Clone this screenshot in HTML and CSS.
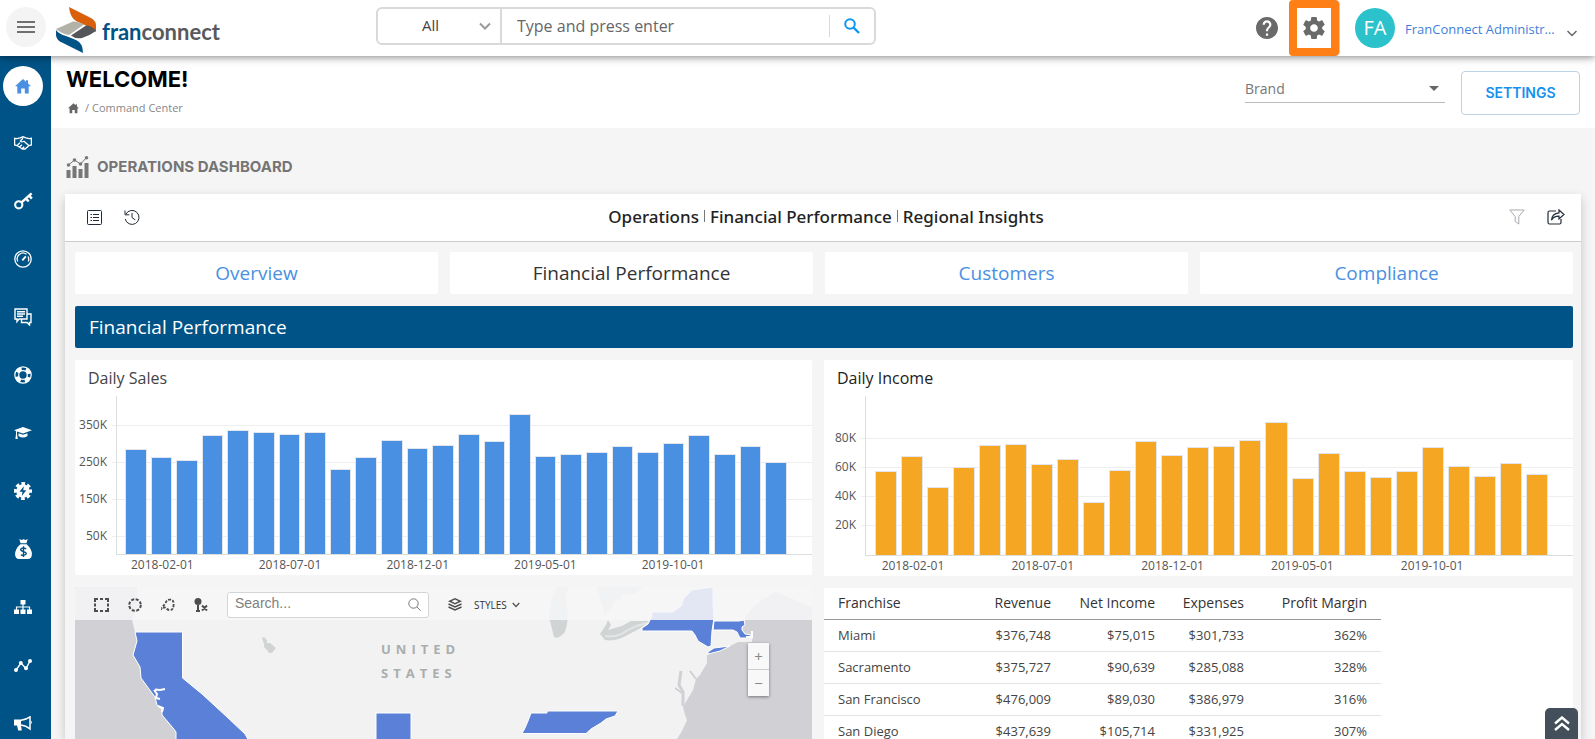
FILE: index.html
```html
<!DOCTYPE html>
<html lang="en">
<head>
<meta charset="utf-8">
<title>Command Center</title>
<link rel="stylesheet" href="styles.css">
</head>
<body>
<header class="topbar">
  <button class="menu-btn" aria-label="Menu"><svg viewBox="0 0 18 12" width="18" height="12"><path d="M0 1h18M0 6h18M0 11h18" stroke="#707070" stroke-width="2"/></svg></button>
  <a class="logo" href="#" aria-label="franconnect">
    <svg viewBox="0 0 40 46" width="40" height="46">
      <path d="M13 0 34 10.500Q40 13.500 40 18V25Q37 21 31 19L20 14Q14 10 13 0Z" fill="#d95f0a"/>
      <path d="M0 22 17 14.500Q22 14 28 17.500L13 28Q6 27 0 22Z" fill="#b3b2a9"/>
      <path d="M40 24Q36 18.500 30 18.500L15 28.500Q19 32 26 31Q33 29 40 24Z" fill="#55565a"/>
      <path d="M0 23Q3 27 10 29L20 33Q27 36 27 46L7 36Q0 33 0 28Z" fill="#005386"/>
    </svg>
    <span class="logo-text"><span class="logo-blue">fran</span>connect</span>
  </a>
  <form class="search">
    <div class="scope"><select class="scope-select" aria-label="Scope"><option>All</option></select>
      <svg viewBox="0 0 12 8" width="12" height="8"><path d="M1 1.500 6 6.500 11 1.500" fill="none" stroke="#999" stroke-width="2"/></svg></div>
    <input class="search-input" type="text" placeholder="Type and press enter" aria-label="Search">
    <button class="search-btn" type="button" aria-label="Search"><svg viewBox="0 0 16 16" width="16" height="16"><circle cx="6" cy="6" r="4.800" fill="none" stroke="#0d96f0" stroke-width="2"/><path d="m9.500 9.500 5.500 5.500" stroke="#0d96f0" stroke-width="2.400"/></svg></button>
  </form>
  <div class="tools">
    <button class="icon-btn" aria-label="Help"><svg viewBox="2 2 20 20" width="22" height="22"><path fill="#6a6a6a" d="M12 2C6.480 2 2 6.480 2 12s4.480 10 10 10 10-4.480 10-10S17.520 2 12 2zm1 17h-2v-2h2v2zm2.070-7.750l-.9.920C13.450 12.900 13 13.500 13 15h-2v-.5c0-1.100.45-2.100 1.170-2.830l1.240-1.260c.37-.36.590-.86.590-1.410 0-1.100-.9-2-2-2s-2 .9-2 2H8c0-2.210 1.790-4 4-4s4 1.790 4 4c0 .88-.36 1.680-.93 2.250z"/></svg></button>
    <button class="gear-btn" aria-label="Settings"><svg viewBox="2 2 20 20" width="22" height="22"><path fill="#6a6a6a" d="M19.430 12.980c.04-.32.070-.64.070-.98s-.03-.66-.07-.98l2.110-1.650c.19-.15.240-.42.120-.64l-2-3.460c-.12-.22-.39-.3-.61-.22l-2.490 1c-.52-.4-1.080-.73-1.690-.98l-.38-2.650A.488.488 0 0 0 14 2h-4c-.25 0-.46.180-.49.420l-.38 2.650c-.61.250-1.170.590-1.690.980l-2.490-1c-.23-.09-.49 0-.61.220l-2 3.460c-.13.220-.07.490.12.640l2.110 1.650c-.04.320-.07.650-.07.980s.03.660.070.980l-2.110 1.650c-.19.150-.24.420-.12.640l2 3.460c.12.220.39.300.61.220l2.490-1c.52.400 1.080.730 1.690.980l.38 2.650c.03.240.24.420.49.420h4c.25 0 .46-.18.490-.42l.38-2.650c.61-.25 1.170-.59 1.690-.98l2.490 1c.23.090.49 0 .61-.22l2-3.460c.12-.22.070-.49-.12-.64l-2.110-1.650zM12 15.500c-1.930 0-3.500-1.570-3.500-3.500s1.570-3.500 3.500-3.500 3.500 1.570 3.500 3.500-1.570 3.500-3.500 3.500z"/></svg></button>
    <span class="avatar">FA</span>
    <a class="user" href="#">FranConnect Administr…</a>
    <svg class="user-caret" viewBox="0 0 10 7" width="10" height="7"><path d="M.5 1 5 5.500 9.500 1" fill="none" stroke="#666" stroke-width="1.500"/></svg>
  </div>
</header>
<div class="shell">
  <nav class="sidebar">
    <a class="side active" href="#" aria-label="Home"><svg viewBox="0 0 16 15" width="16" height="15"><path fill="#4a8fe2" d="M8 0 0 7.200h2.300V14.500h3.900V9.500h3.600v5h3.900V7.200H16L13 4.500V1.300h-2v1.400Z"/></svg></a>
    <a class="side" href="#" aria-label="Relations"><svg viewBox="0 0 18 14" width="18" height="14"><path fill="none" stroke="#fff" stroke-width="1.300" d="M.6 2.300 3 2.600 6 1.800 9 .8 12 1.800 15 2.600 17.400 2.300V9L15 9.500 11 13H8.500L3 9.500.6 9ZM9 2.300 6.300 5Q7.500 6.700 10 5.200L14.500 9.300M3.500 9 6 6.800M5.500 11 8 8.800M8 12.700l2.200-2"/></svg></a>
    <a class="side" href="#" aria-label="Access"><svg viewBox="0 0 20 18" width="19" height="18"><circle cx="5" cy="13" r="3.800" fill="none" stroke="#fff" stroke-width="2.200"/><path d="M8 10.500 18.500 1M12.500 6.500l3 3M16 3.500l2.800 3" stroke="#fff" stroke-width="2.600" fill="none"/></svg></a>
    <a class="side" href="#" aria-label="Performance"><svg viewBox="0 0 18 18" width="18" height="18" fill="none" stroke="#fff"><circle cx="9" cy="9" r="8.200" stroke-width="1.300"/><path stroke-width="1.300" d="M3.800 11.500A5.800 5.800 0 0 1 12.500 4.300M14 6.500a5.800 5.800 0 0 1 .3 5"/><path d="m8.300 10.300 3.500-4" stroke-width="1.800"/></svg></a>
    <a class="side" href="#" aria-label="Messages"><svg viewBox="0 0 18 18" width="18" height="18" fill="none" stroke="#fff" stroke-width="1.400"><path d="M1 1h12v10H5l-2 2.500V11H1ZM3 3.700h8M3 6h8M3 8.300h6M13 6h4v8.500h-1.500V17L13 14.500H7.500V11"/></svg></a>
    <a class="side" href="#" aria-label="Support"><svg viewBox="0 0 18 18" width="18" height="18" fill="none" stroke="#fff"><circle cx="9" cy="9" r="8.200" stroke-width="1.200"/><circle cx="9" cy="9" r="4.300" stroke-width="1.200"/><circle cx="9" cy="9" r="6.300" stroke-width="4" stroke-dasharray="5.500 4.396" stroke-dashoffset="-2.200"/></svg></a>
    <a class="side" href="#" aria-label="Training"><svg viewBox="0 0 18 13" width="18" height="13"><path fill="#fff" d="M9 0 18 3.200 9 6.500 3 4.400V7l.8 5H1.400L2 7V4L0 3.200ZM4.500 6.200 9 7.800l4.500-1.600V9Q9 12 4.500 9Z"/></svg></a>
    <a class="side" href="#" aria-label="Automation"><svg viewBox="0 0 18 18" width="18" height="18"><circle cx="9" cy="9" r="6.800" fill="#fff"/><circle cx="9" cy="9" r="7.500" fill="none" stroke="#fff" stroke-width="3" stroke-dasharray="3.600 2.290" stroke-dashoffset="1.800"/><path fill="#005386" d="M9.800 4.200 5.500 9.800h3l-.7 4.200 4.500-5.800h-3Z"/></svg></a>
    <a class="side" href="#" aria-label="Finance"><svg viewBox="0 0 16 19" width="17" height="20"><path fill="#fff" d="M4 0 6 1 8 .3 10 1 12 0 10.800 4h-5.600ZM5 5h6q5 4.500 5 9.500Q16 19 12 19H4Q0 19 0 14.500 0 9.500 5 5Z"/><path d="M10.500 9.500Q8 7.800 6 9.200T8 12t2 2.700-4.500.3M8 7v10" stroke="#005386" stroke-width="1.300" fill="none"/></svg></a>
    <a class="side" href="#" aria-label="Organization"><svg viewBox="0 0 18 14" width="18" height="14"><path fill="#fff" d="M6.500 0h5v4.500h-5ZM0 9.500h5V14H0ZM6.500 9.500h5V14h-5ZM13 9.500h5V14h-5Z"/><path d="M9 4v6M2.500 10V7h13v3" fill="none" stroke="#fff" stroke-width="1.200"/></svg></a>
    <a class="side" href="#" aria-label="Analytics"><svg viewBox="0 0 18 13" width="18" height="13"><path d="m2 11 5-7 5 5.500L16 2" fill="none" stroke="#fff" stroke-width="1.400"/><g fill="#fff"><circle cx="2" cy="11" r="2"/><circle cx="6.800" cy="4" r="2"/><circle cx="12" cy="9.300" r="2"/><circle cx="16" cy="2" r="2"/></g></svg></a>
    <a class="side" href="#" aria-label="Marketing"><svg viewBox="0 0 18 15" width="18" height="15"><path fill="#fff" d="M0 3.500h7V9.500l.8 5H4.200L3 9.500H0ZM16.800 4.500q2 1.500 0 4Z"/><path d="M7 4.200q5-.5 9-3.400v12Q12 9.500 7 9" fill="none" stroke="#fff" stroke-width="1.500"/></svg></a>
  </nav>
  <main class="main">
    <section class="pagehead">
      <div class="headings">
        <h1 class="welcome">WELCOME!</h1>
        <div class="crumbs"><svg viewBox="0 0 16 15" width="11" height="11"><path fill="#666" d="M8 0 0 7.200h2.300V14.500h3.900V9.500h3.600v5h3.900V7.200H16L13 4.500V1.300h-2v1.400Z"/></svg><span class="slash">/</span><a class="crumb" href="#">Command Center</a></div>
      </div>
      <div class="brand"><select class="brand-select" aria-label="Brand"><option>Brand</option></select>
        <svg viewBox="0 0 10 5" width="10" height="5"><path d="M0 0h10L5 5Z" fill="#666"/></svg></div>
      <button class="settings">SETTINGS</button>
    </section>
    <h2 class="section-title"><svg viewBox="0 0 22 22" width="23" height="22"><path fill="#777" d="M0 14h4v8H0ZM6 10h4v12H6ZM12 13h4v9h-4ZM18 7h4v15h-4Z"/><path d="m2 9 6-5 6 4 6-6.500" fill="none" stroke="#777"/><g fill="#777"><circle cx="2" cy="9" r="1.800"/><circle cx="8" cy="4" r="1.800"/><circle cx="14" cy="8" r="1.800"/><circle cx="20" cy="1.800" r="1.800"/></g></svg>OPERATIONS DASHBOARD</h2>
    <section class="board">
      <div class="board-head">
        <div class="board-icons">
          <button class="icon-btn" aria-label="List"><svg viewBox="0 0 15 15" width="15" height="15" fill="none" stroke="#222b38"><rect x=".5" y=".5" width="14" height="14" rx="1"/><path d="M6 4.500h6M6 7.500h6M6 10.500h6M3.500 4.500H5M3.500 7.500H5M3.500 10.500H5"/></svg></button>
          <button class="icon-btn" aria-label="History"><svg viewBox="0 0 16 16" width="16" height="16" fill="none" stroke="#222b38"><path d="M1.800 5.200A7 7 0 1 1 1.200 10M1 1.500v4.300h4.300M8 4v4.500l3.300 2.500"/></svg></button>
        </div>
        <h3 class="board-title"><span>Operations</span><i></i><span>Financial Performance</span><i></i><span>Regional Insights</span></h3>
        <div class="board-icons right">
          <button class="icon-btn" aria-label="Filter"><svg viewBox="0 0 16 16" width="16" height="16" fill="none" stroke="#a9a9b0"><path d="M.8 1h14.400L9.800 7.500V15L6.200 12.500v-5Z"/></svg></button>
          <button class="icon-btn" aria-label="Share"><svg viewBox="0 0 18 16" width="18" height="16" fill="none" stroke="#222b38" stroke-width="1.200"><path d="M9 2H2.500Q1 2 1 3.500v10Q1 15 2.500 15h10q1.500 0 1.500-1.500V10M12 1l5 4.500L12 10V7.200q-5-.2-7.500 4Q5 4.500 12 3.800Z"/></svg></button>
        </div>
      </div>
      <div class="board-body">
        <nav class="tabs">
          <a class="tab" href="#">Overview</a><a class="tab current" href="#">Financial Performance</a><a class="tab" href="#">Customers</a><a class="tab" href="#">Compliance</a>
        </nav>
        <h3 class="banner">Financial Performance</h3>
        <div class="cards">
          <div class="column">
            <section class="card chart sales">
              <h4 class="card-title">Daily Sales</h4>
              <div class="yaxis"><span>350K</span><span>250K</span><span>150K</span><span>50K</span></div>
              <div class="lines"><i></i><i></i><i></i><i></i></div>
              <div class="bars">
                <i style="height:105px"></i><i style="height:97px"></i><i style="height:94px"></i><i style="height:119px"></i><i style="height:124px"></i><i style="height:122px"></i><i style="height:120px"></i><i style="height:122px"></i><i style="height:85px"></i><i style="height:97px"></i><i style="height:114px"></i><i style="height:106px"></i><i style="height:109px"></i><i style="height:120px"></i><i style="height:113px"></i><i style="height:140px"></i><i style="height:98px"></i><i style="height:100px"></i><i style="height:102px"></i><i style="height:108px"></i><i style="height:102px"></i><i style="height:111px"></i><i style="height:119px"></i><i style="height:100px"></i><i style="height:108px"></i><i style="height:92px"></i>
              </div>
              <div class="xaxis"><span>2018-02-01</span><span>2018-07-01</span><span>2018-12-01</span><span>2019-05-01</span><span>2019-10-01</span></div>
            </section>
            <section class="card map">
              <svg class="map-art" viewBox="0 0 737 180" preserveAspectRatio="xMinYMin slice">
                <rect width="737" height="180" fill="#f2f2f2"/>
                <path fill="#d1d0d5" d="M0 0H62V20L57 33 60 45 62 54 58 68 65 80 66 91 74 102 80 110 82 118 87 122V128L98 141 101 145V180H0Z"/>
                <path fill="#d1d0d5" d="M737 20 718 12 700 5 692 10 680 18 672 28 669 37 667 42 672 50 678 47 677 55 663 55 655 59 632 68 632 76 625 88 621 92 618 103 612 113 608 120 610 128 612 133 607 144 602 152V180H737Z"/>
                <g fill="#d0d4d4"><path d="M187 51 189 50 192 53 192 56 195 56 201 61 197 66 194 66 192 63 189 60 189 57Z"/>
                <path d="M474 30Q475 12 482 0H494Q488 8 492 20 494 34 490 45 483 53 479 50 474 42Z"/>
                <path d="M525 47 531 38 533 33 536 38 533 43 547 39 556 34H574Q566 42 554 47 542 55 530 53Z"/>
                <path d="M522 0H568Q555 12 548 6 545 15 541 12 538 20 530 28 526 14Z"/></g>
                <path d="M530 49Q542 51 553 43 562 38 572 36" fill="none" stroke="#e3e6e6" stroke-width="2"/>
                <path d="M606 84 604 98 608 105V119" fill="none" stroke="#d1d0d5" stroke-width="3"/><path d="M600 101 607 106M615 84 621 92" stroke="#d1d0d5" stroke-width="2"/>
                <g fill="#5b80d8" stroke="#fff" stroke-width="1"><path d="M60 45H107.500V91L127 107 152 130 170 147 180 165V180H101V145L98 141 87 128V122L82 118 80 110 74 102 66 91 65 80 58 68 62 54Z"/>
                <path d="M301 126H336V181H301Z"/>
                <path d="M456 126H472V124H520L543 124 540 129 531 132 526 136 516 142 511 146.500H447L450 141 453 134Z"/>
                <path d="M567 44V41L573 37 577 29V25H598L606 19 609 11 617 3 638 0V18L639 31 637 44 636 59 633 60 623 54 620 48 617 44Z"/>
                <path d="M639 34H664L669 33 670 38 667 40 667 43 670 47 677 48 671 51 665 51 662 45 658 43H638Z"/>
                <path d="M633 65 639 61 655 59 645 64 633 67Z"/></g>
                <path d="M80 102.500 85 103 90 102M79 103 82 107 81 111 85 112M83 119 88 121 87 125M671 50 677 50V44" fill="none" stroke="#fff" stroke-width="2"/>
                <g class="map-name"><text x="306" y="67">UNITED</text><text x="306" y="91">STATES</text></g>
              </svg>
              <div class="map-tools">
                <button class="icon-btn" aria-label="Rectangle select"><svg viewBox="0 0 15 14" width="15" height="14"><path fill="none" stroke="#4d4d4d" stroke-width="2" d="M1 4V1h3M6 1h3M11 1h3v3M14 5.500v3M14 10v3h-3M9 13H6M4 13H1v-3M1 8.500v-3"/></svg></button>
                <button class="icon-btn" aria-label="Circle select"><svg viewBox="0 0 14 14" width="14" height="14"><circle cx="7" cy="7" r="5.800" fill="none" stroke="#4d4d4d" stroke-width="2" stroke-dasharray="3 1.555"/></svg></button>
                <button class="icon-btn" aria-label="Lasso select"><svg viewBox="0 0 15 14" width="14" height="14"><path fill="none" stroke="#4d4d4d" stroke-width="2" stroke-dasharray="3 1.500" d="M5 5Q6 1 10 1.200T13.500 7 10 12.500 5.500 10.500 1 11 5 5"/></svg></button>
                <button class="icon-btn" aria-label="Clear pins"><svg viewBox="0 0 14 14" width="14" height="14"><circle cx="4" cy="3.500" r="3.500" fill="#4d4d4d"/><path d="M4 7v6M2 13h4M8 7.500l5 5M13 7.500l-5 5" stroke="#4d4d4d" stroke-width="2"/></svg></button>
                <label class="map-search"><input class="map-input" type="text" placeholder="Search..." aria-label="Search map"><svg viewBox="0 0 13 13" width="13" height="13" fill="none" stroke="#777"><circle cx="5.500" cy="5.500" r="4.700"/><path d="m9 9 3.600 3.600"/></svg></label>
                <svg viewBox="0 0 14 13" width="14" height="13"><path fill="#4d4d4d" fill-rule="evenodd" d="m7 0 7 3.300L7 6.600 0 3.300ZM7 1.600 3.500 3.300 7 5l3.500-1.700Z"/><path d="m.5 6 6.500 3 6.500-3M.5 9 7 12l6.500-3" fill="none" stroke="#4d4d4d" stroke-width="1.400"/></svg>
                <button class="styles-btn">STYLES <svg viewBox="0 0 8 6" width="8" height="6"><path d="M.7 1 4 4.500 7.300 1" fill="none" stroke="#555" stroke-width="1.300"/></svg></button>
              </div>
              <div class="zoomers"><button class="zoomer">+</button><button class="zoomer">−</button></div>
            </section>
          </div>
          <div class="column">
            <section class="card chart income">
              <h4 class="card-title">Daily Income</h4>
              <div class="yaxis"><span>80K</span><span>60K</span><span>40K</span><span>20K</span></div>
              <div class="lines"><i></i><i></i><i></i><i></i></div>
              <div class="bars">
                <i style="height:84px"></i><i style="height:99px"></i><i style="height:68px"></i><i style="height:88px"></i><i style="height:110px"></i><i style="height:111px"></i><i style="height:91px"></i><i style="height:96px"></i><i style="height:53px"></i><i style="height:85px"></i><i style="height:114px"></i><i style="height:100px"></i><i style="height:108px"></i><i style="height:109px"></i><i style="height:115px"></i><i style="height:133px"></i><i style="height:77px"></i><i style="height:102px"></i><i style="height:84px"></i><i style="height:78px"></i><i style="height:84px"></i><i style="height:108px"></i><i style="height:89px"></i><i style="height:79px"></i><i style="height:92px"></i><i style="height:81px"></i>
              </div>
              <div class="xaxis"><span>2018-02-01</span><span>2018-07-01</span><span>2018-12-01</span><span>2019-05-01</span><span>2019-10-01</span></div>
            </section>
            <section class="card listing">
              <table class="table">
                <thead><tr><th>Franchise</th><th>Revenue</th><th>Net Income</th><th>Expenses</th><th>Profit Margin</th></tr></thead>
                <tbody>
                  <tr><td>Miami</td><td>$376,748</td><td>$75,015</td><td>$301,733</td><td>362%</td></tr>
                  <tr><td>Sacramento</td><td>$375,727</td><td>$90,639</td><td>$285,088</td><td>328%</td></tr>
                  <tr><td>San Francisco</td><td>$476,009</td><td>$89,030</td><td>$386,979</td><td>316%</td></tr>
                  <tr><td>San Diego</td><td>$437,639</td><td>$105,714</td><td>$331,925</td><td>307%</td></tr>
                </tbody>
              </table>
            </section>
          </div>
        </div>
      </div>
    </section>
  </main>
</div>
<button class="to-top" aria-label="Back to top"><svg viewBox="0 0 16 15" width="16" height="15"><path d="m1 7.500 7-6 7 6M1 14l7-6 7 6" fill="none" stroke="#fff" stroke-width="2.400"/></svg></button>
</body>
</html>
```
FILE: styles.css
```css
* { box-sizing: border-box; }
body { margin: 0; height: 100vh; overflow: hidden; display: flex; flex-direction: column; font-family: "Open Sans", "Noto Sans", sans-serif; font-size: 13px; color: #444; background: #f5f5f5; }
h1, h2, h3, h4 { margin: 0; font-weight: 400; }
a { text-decoration: none; color: inherit; }
button { font: inherit; border: 0; padding: 0; background: none; cursor: pointer; }
svg { display: block; flex: none; }
select { appearance: none; border: 0; background: none; font: inherit; }

.topbar { flex: none; height: 56px; display: flex; align-items: center; background: #fff; box-shadow: 0 1px 8px rgba(0,0,0,.5); padding: 0 18px 2px 6px; position: relative; z-index: 2; }
.menu-btn { width: 40px; height: 40px; border-radius: 50%; background: #f4f4f4; display: grid; place-items: center; }
.logo { display: flex; align-items: center; gap: 6px; margin-left: 10px; padding-top: 5px; width: 320px; }
.logo-text { font-family: Lato, sans-serif; font-size: 22px; font-weight: 700; line-height: 30px; padding-top: 5px; color: #58595b; }
.logo-blue { color: #005386; }
.search { display: flex; width: 500px; height: 38px; border: 2px solid #d9d9d9; border-radius: 6px; margin: 0 0 2px; }
.scope { width: 124px; display: flex; align-items: center; border-right: 2px solid #d9d9d9; padding-right: 9px; }
.scope-select { flex: 1; font-size: 15px; color: #444; text-align: center; text-align-last: center; padding: 0 0 2px 4px; }
.search-input { flex: 1; border: 0; outline: 0; background: none; font: inherit; font-size: 16px; padding: 0 15px; }
.search-input::placeholder { color: #666; opacity: 1; }
.search-btn { width: 45px; margin: 6px 0; border-left: 1px solid #d9d9d9; display: grid; place-items: center; }
.tools { margin-left: auto; display: flex; align-items: center; padding-top: 2px; }
.icon-btn { display: block; }
.gear-btn { width: 50px; height: 56px; border: 8px solid #ff7f17; border-radius: 4px; margin: 0 16px 0 11px; display: grid; place-items: center; box-shadow: 2px 0 0 -1px #ccc; }
.avatar { width: 40px; height: 40px; border-radius: 50%; background: #2bc2cb; color: #fff; font-size: 20px; line-height: 39px; text-align: center; }
.user { width: 172px; padding-left: 10px; color: #3f7fdc; font-size: 13px; padding-top: 2px; white-space: nowrap; }
.user-caret { margin-top: 10px; }

.shell { flex: 1; min-height: 0; display: flex; }
.sidebar { flex: none; width: 51px; background: #005386; padding: 10px 0 0 3px; overflow: hidden; display: flex; flex-direction: column; gap: 18px; }
.side { flex: none; width: 40px; height: 40px; border-radius: 50%; display: grid; place-items: center; padding-bottom: 2px; }
.side.active { background: #fff; padding-bottom: 0; }
.main { flex: 1; min-width: 0; overflow: hidden; display: flex; flex-direction: column; }
.pagehead { flex: none; height: 72px; background: #fff; display: flex; align-items: flex-start; padding: 8px 15px 0 15px; }
.headings { flex: 1; }
.welcome { font-family: Inter, sans-serif; font-size: 22px; font-weight: 700; line-height: 30px; color: #000; }
.crumbs { display: flex; align-items: center; gap: 3px; padding: 6px 0 0 2px; font-size: 11px; line-height: 16px; color: #888; }
.slash { padding-left: 3px; }
.brand { width: 200px; height: 31px; margin: 8px 16px 0 0; border-bottom: 1px solid #bbb; display: flex; align-items: center; padding: 3px 6px 0 0; }
.brand-select { flex: 1; font-size: 14px; color: #777; padding: 0; }
.settings { width: 119px; height: 44px; margin-top: 7px; padding-bottom: 2px; border: 1px solid #bcd3e6; border-radius: 4px; font-family: Inter, sans-serif; font-size: 14px; font-weight: 600; color: #1390f0; }
.section-title { flex: none; display: flex; align-items: center; gap: 8px; height: 66px; padding: 11px 0 0 15px; font-family: Inter, sans-serif; font-size: 15px; font-weight: 700; color: #757575; }

.board { flex: 1; min-height: 0; margin: 0 14px; box-shadow: 0 4px 10px rgba(0,0,0,.2); background: #f5f5f5; }
.board-head { height: 48px; background: #fff; border-bottom: 1px solid #ccc; display: grid; grid-template-columns: 1fr auto 1fr; align-items: center; padding: 0 16px 1px 22px; }
.board-icons { display: flex; align-items: center; gap: 22px; }
.board-icons.right { justify-content: flex-end; }
.board-title { display: flex; align-items: center; gap: 5px; font-family: "Noto Sans", sans-serif; font-size: 17px; font-weight: 500; color: #222; padding-bottom: 2px; }
.board-title i { width: 1px; height: 12px; background: #777; }
.board-body { padding: 10px 8px 0 10px; display: flex; flex-direction: column; gap: 12px; }
.tabs { display: grid; grid-template-columns: 363fr 363fr 363fr 373fr; gap: 12px; }
.tab { background: #fff; border-radius: 2px; text-align: center; font-size: 19px; line-height: 42px; color: #4a90e2; }
.tab.current { color: #333; font-weight: 500; }
.banner { background: #005386; color: #fff; border-radius: 2px; font-size: 19px; line-height: 42px; padding-left: 14px; }
.cards { display: grid; grid-template-columns: 737fr 749fr; gap: 12px; align-items: start; }
.column { display: flex; flex-direction: column; gap: 12px; min-width: 0; }
.card { background: #fff; border-radius: 2px; min-width: 0; }
.chart { display: grid; }
.chart.sales { grid-template: 36px 159px 20px / 41px 1fr; --bar: #4a90e2; --step: 37px; --first: 10px; --lead: 8px; }
.chart.income { grid-template: 36px 160px 20px / 41px 1fr; --bar: #f5a623; --step: 29px; --first: 27px; --lead: 9px; }
.card-title { grid-area: 1 / 1 / 2 / 3; font-size: 16px; line-height: 36px; padding-left: 13px; color: #444; }
.yaxis { grid-area: 2 / 1; padding: var(--first) 9px 0 0; text-align: right; font-size: 12px; line-height: var(--step); color: #555; display: flex; flex-direction: column; }
.lines { grid-area: 2 / 2; padding-top: calc(var(--first) + var(--step) / 2); margin-left: -4px; }
.lines i { display: block; height: var(--step); border-top: 1px solid #eee; }
.lines i:last-child { height: 1px; }
.bars { grid-area: 2 / 2; position: relative; border-left: 1px solid #ddd; border-bottom: 1px solid #ddd; padding: 0 25px 0 var(--lead); display: flex; align-items: flex-end; gap: 4px; }
.bars i { flex: 1; background: var(--bar); border: 1px solid #e3e5ec; border-bottom: 0; }
.xaxis { grid-area: 3 / 2; display: grid; grid-template-columns: 3fr 2fr 3fr 2fr 3fr 2fr 3fr 2fr 3fr 3fr; padding: 0 24px 0 var(--lead); font-size: 12px; line-height: 20px; color: #555; text-align: center; white-space: nowrap; }
.xaxis span:nth-child(2) { grid-column: 3; }
.xaxis span:nth-child(3) { grid-column: 5; }
.xaxis span:nth-child(4) { grid-column: 7; }
.xaxis span:nth-child(5) { grid-column: 9; }
.income .card-title { color: #222; }

.map { position: relative; overflow: hidden; height: 180px; }
.map-art { width: 100%; height: 180px; }
.map-name { font-size: 13px; font-weight: 700; letter-spacing: 5px; fill: #a9aead; }
.map-tools { position: absolute; inset: 0 0 auto 0; height: 33px; background: rgba(246,246,247,.87); display: flex; align-items: center; gap: 19px; padding: 2px 0 0 19px; }
.map-search { display: flex; align-items: center; width: 202px; height: 26px; background: #fff; border: 1px solid #d5d5d5; border-radius: 3px; padding: 0 7px; }
.map-input { flex: 1; min-width: 0; border: 0; outline: 0; padding: 0 0 3px; background: none; font-family: "Liberation Sans", sans-serif; font-size: 14px; }
.map-input::placeholder { color: #808080; opacity: 1; }
.styles-btn { display: flex; align-items: center; gap: 5px; font-size: 10px; margin-left: -7px; color: #333; }
.zoomers { position: absolute; top: 56px; right: 43px; width: 21px; background: #f8f8f8; box-shadow: 0 1px 3px rgba(0,0,0,.45); }
.zoomer { display: block; width: 21px; height: 26px; font-size: 15px; line-height: 24px; color: #888; }
.zoomer + .zoomer { border-top: 1px solid #ccc; height: 27px; }

.listing { height: 180px; overflow: hidden; }
.table { width: 557px; border-collapse: collapse; table-layout: fixed; font-size: 13px; color: #444; }
.table th, .table td { height: 32px; padding: 0 14px 1px 0; text-align: right; font-weight: 400; border-bottom: 1px solid #e3e3e3; }
.table th { height: 31px; border-bottom-color: #999; color: #333; font-size: 14px; }
.table th:first-child, .table td:first-child { text-align: left; padding-left: 14px; }
.table th:nth-child(1) { width: 140px; }
.table th:nth-child(2) { width: 101px; }
.table th:nth-child(3) { width: 104px; }
.table th:nth-child(4) { width: 89px; }

.to-top { position: fixed; right: 17px; bottom: 0; width: 33px; height: 31px; border-radius: 5px 5px 0 0; background: #43505b; display: grid; place-items: center; z-index: 3; }
```
